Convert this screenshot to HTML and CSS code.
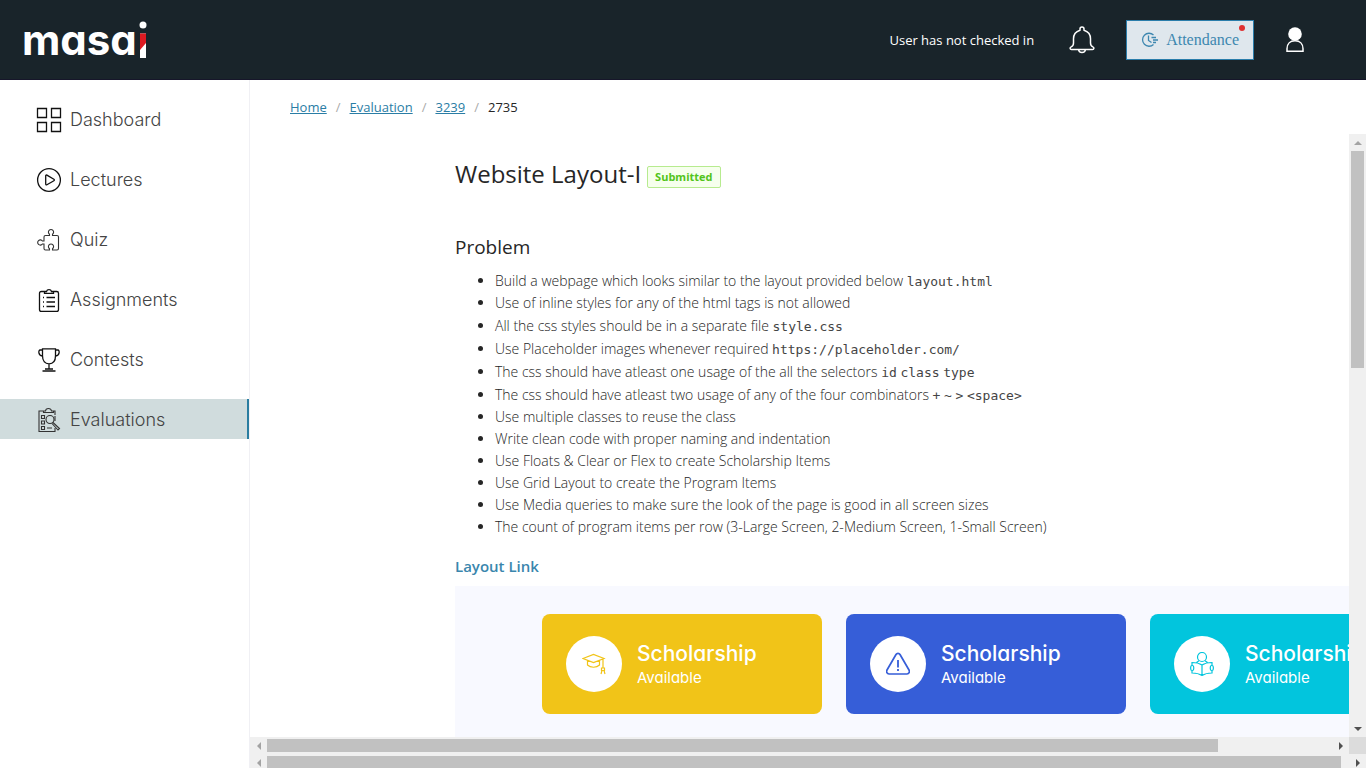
FILE: index.html
```html
<!DOCTYPE html>
<html lang="en">
<head>
<meta charset="utf-8">
<meta name="viewport" content="width=device-width, initial-scale=1">
<title>Website Layout-I</title>
<link rel="stylesheet" href="styles.css">
</head>
<body>
<header class="topbar">
  <a class="logo" href="#" aria-label="masai">
    <span class="logo-text">masa</span>
    <svg class="logo-i" width="10" height="38" viewBox="0 0 10 38"><circle cx="6" cy="4" r="3.500" fill="#fff"/><path d="M3 12.500h6V37H3z" fill="#fff"/><path d="M3 12.500h6V22L3 29z" fill="#dd1a21"/></svg>
  </a>
  <div class="topbar-tools">
    <span class="check-state">User has not checked in</span>
    <button class="icon-button" aria-label="Notifications">
      <svg width="26" height="28" viewBox="0 0 26 28" fill="none" stroke="#fff" stroke-width="1.500" stroke-linejoin="round"><path d="M11 4.200V3a2 2 0 0 1 4 0v1.200c4.300 1.300 6.500 4.600 6.500 8.600v4.200c0 2 .7 3.200 2.300 3.900 1.700.8 1.300 2.600-.3 2.600H2.500c-1.600 0-2-1.800-.3-2.600 1.600-.7 2.300-1.900 2.300-3.900v-4.200c0-4 2.200-7.300 6.500-8.600zM9.500 23.500c.4 4 6.600 4 7 0"/></svg>
    </button>
    <button class="attendance">
      <svg width="18" height="16" viewBox="0 0 18 16" fill="none" stroke="#3d87b0" stroke-width="1.300"><path d="M12.500 3A6.500 6.500 0 1 0 12.500 12.500M7.500 3.500v5l3 2M10.500 5.500h4.500M12 8h5M12 10.500h3"/></svg>
      <span>Attendance</span>
      <i class="dot"></i>
    </button>
    <button class="icon-button" aria-label="Profile">
      <svg width="20" height="26" viewBox="0 0 20 26"><circle cx="10" cy="7" r="6.800" fill="#fff"/><path d="M2 24.300v-2.500c0-4.800 3-8 8-8s8 3.200 8 8v2.500z" fill="none" stroke="#fff" stroke-width="1.500"/></svg>
    </button>
  </div>
</header>
<div class="shell">
  <nav class="sidebar" aria-label="Main">
    <a class="nav-item" href="#"><svg class="nav-icon" viewBox="0 0 24 24"><path d="M.5.500h9v9h-9zM14.500.500h9v9h-9zM.5 14.500h9v9h-9zM14.500 14.500h9v9h-9z"/></svg><span>Dashboard</span></a>
    <a class="nav-item" href="#"><svg class="nav-icon" viewBox="0 0 24 24"><circle cx="12" cy="12" r="11.400"/><path d="M8.700 7.800c0-.7.700-1 1.200-.7l7 4.100c.6.400.6 1.200 0 1.500l-7 4.100c-.5.300-1.200 0-1.200-.7z"/></svg><span>Lectures</span></a>
    <a class="nav-item" href="#"><svg class="nav-icon thin" viewBox="0 0 24 24"><path d="M7 9c0-1 .6-1.500 1.500-1.500h4V6.200a2.600 2.600 0 1 1 3 0v1.300h4.500c1 0 1.500.6 1.500 1.500v11.500c0 1-.6 1.500-1.500 1.500h-4.500v-1.300a2.600 2.600 0 1 0-3 0V22h-4C7.600 22 7 21.500 7 20.500V16H5.400a2.600 2.600 0 1 1 0-3H7z"/></svg><span>Quiz</span></a>
    <a class="nav-item" href="#"><svg class="nav-icon" viewBox="0 0 24 24"><path d="M7.500 3.500H4.300C3.200 3.500 2.500 4.200 2.500 5.300V21.500c0 1.100.7 1.900 1.800 1.900h15.400c1.100 0 1.800-.8 1.800-1.900V5.300c0-1.100-.7-1.800-1.800-1.800h-3.200v1.900h-9zM7.500 3.500h2a2.600 2.600 0 0 1 5 0h2M9.500 9.500H18M9.500 14H18M9.500 18.500H18M6 9.500h1M6 14h1M6 18.500h1"/></svg><span>Assignments</span></a>
    <a class="nav-item" href="#"><svg class="nav-icon" viewBox="0 0 24 24"><path d="M5.500.8h13v7c0 5.500-2.700 8-6.500 8s-6.500-2.500-6.500-8zM5.500 2H3.200C.9 2 1.300 8 5.700 8M18.500 2h2.300c2.300 0 1.900 6-2.500 6M12 16v5M8 21h8M5.500 23h13"/></svg><span>Contests</span></a>
    <a class="nav-item active" href="#" aria-current="page"><svg class="nav-icon thin" viewBox="0 0 24 24"><path d="M7 3H2v20.500h16V20M18 7V3h-4M6.500 4.500V3h2c.3-3.400 5.500-3.400 6 0h2v1.500zM4.500 7.500h3v3h-3zM4.500 13h3v3h-3zM4.500 18.500h3v3h-3zM10 20h5"/><circle cx="13" cy="11.500" r="4"/><path d="m16 14.500 6.500 6-1.500 1.500-6-6.500M18 8v5"/></svg><span>Evaluations</span></a>
  </nav>
  <main class="main">
    <nav class="crumbs" aria-label="Breadcrumb"><a href="#">Home</a><i>/</i><a href="#">Evaluation</a><i>/</i><a href="#">3239</a><i>/</i><span>2735</span></nav>
    <div class="frame">
      <article class="doc">
        <div class="title-row"><h1>Website Layout-I</h1><span class="tag">Submitted</span></div>
        <h2>Problem</h2>
        <ul class="tasks">
          <li class="has-code">Build a webpage which looks similar to the layout provided below <code>layout.html</code></li>
          <li>Use of inline styles for any of the html tags is not allowed</li>
          <li class="has-code">All the css styles should be in a separate file <code>style.css</code></li>
          <li class="has-code">Use Placeholder images whenever required <code>https://placeholder.com/</code></li>
          <li class="has-code">The css should have atleast one usage of the all the selectors <code>id</code> <code>class</code> <code>type</code></li>
          <li class="has-code">The css should have atleast two usage of any of the four combinators <code>+</code> <code>~</code> <code>&gt;</code> <code>&lt;space&gt;</code></li>
          <li>Use multiple classes to reuse the class</li>
          <li>Write clean code with proper naming and indentation</li>
          <li>Use Floats &amp; Clear or Flex to create Scholarship Items</li>
          <li>Use Grid Layout to create the Program Items</li>
          <li>Use Media queries to make sure the look of the page is good in all screen sizes</li>
          <li>The count of program items per row (3-Large Screen, 2-Medium Screen, 1-Small Screen)</li>
        </ul>
        <a class="layout-link" href="#">Layout Link</a>
        <div class="preview">
          <section class="card yellow"><span class="badge"><svg width="24" height="24" viewBox="0 0 24 24"><path d="M1 6.500 11.500 2.500 22 6.500 11.500 10.500zM5.500 8.500v4.500c3 3 9 3 12 0V8.500M21 7v8.500M19.500 16h3v2.500h-3zM20 18.500l-1 3.500M22 18.500l1 3.500"/></svg></span><div><h3>Scholarship</h3><p>Available</p></div></section>
          <section class="card blue"><span class="badge"><svg width="24" height="24" viewBox="0 0 24 24"><path stroke-width="1.700" d="M10 2.500a2.300 2.300 0 0 1 4 0l9 15.500c1 1.900 0 4-2 4H3c-2 0-3-2.100-2-4z"/><path stroke-width="1.800" d="M12 8v7.500M12 17v2"/></svg></span><div><h3>Scholarship</h3><p>Available</p></div></section>
          <section class="card cyan"><span class="badge"><svg width="24" height="24" viewBox="0 0 24 24"><circle cx="12" cy="5" r="4.500"/><path d="M12 13c-3-2-6-2.500-10-2.500V21c4 0 7 .5 10 2.500 3-2 6-2.500 10-2.500V10.500c-4 0-7 .5-10 2.500zM12 13v10M6.500 10.500 9 8.800M17.500 10.500 15 8.800"/><rect x=".7" y="13.500" width="3" height="5" rx="1.500" fill="#fff"/><rect x="20.300" y="13.500" width="3" height="5" rx="1.500" fill="#fff"/></svg></span><div><h3>Scholarship</h3><p>Available</p></div></section>
        </div>
      </article>
      <div class="bar vertical" aria-hidden="true"><i class="arrow up"></i><b class="thumb"></b><i class="arrow down"></i></div>
      <div class="bar horizontal" aria-hidden="true"><i class="arrow left"></i><b class="thumb inner"></b><i class="arrow right"></i></div>
      <div class="corner"></div>
    </div>
    <div class="bar horizontal outer" aria-hidden="true"><i class="arrow left"></i><b class="thumb"></b><i class="arrow right"></i></div>
  </main>
</div>
</body>
</html>
```
FILE: styles.css
```css
* { box-sizing: border-box; }
body {
  margin: 0;
  height: 100vh;
  display: flex;
  flex-direction: column;
  overflow: hidden;
  background: #fff;
  color: #262626;
  font: 14px/22px "Open Sans", "Noto Sans", sans-serif;
}
h1, h2, h3, p, ul { margin: 0; padding: 0; font-weight: 500; }
i { font-style: normal; }
svg { display: block; flex: none; }
button { margin: 0; padding: 0; border: 0; background: none; cursor: pointer; }

.topbar {
  flex: none;
  height: 80px;
  padding: 0 58px 0 22px;
  display: flex;
  align-items: center;
  justify-content: space-between;
  background: #19242a;
  border-bottom: 1px solid #16162a;
}
.logo { display: flex; align-items: center; color: #fff; text-decoration: none; }
.logo-text { font: 700 42px/48px Inter, sans-serif; font-feature-settings: "cv11"; }
.topbar-tools { display: flex; align-items: center; color: #fff; }
.check-state { font-size: 13px; }
.icon-button { display: flex; justify-content: center; width: 26px; }
.topbar-tools .icon-button { margin-left: 35px; }
.topbar-tools .attendance { margin-left: 31px; }
.topbar-tools .attendance + .icon-button { margin-left: 28px; }
.attendance {
  position: relative;
  display: flex;
  align-items: center;
  gap: 7px;
  height: 40px;
  padding: 0 14px;
  border: 1px solid #2a7dab;
  background: #dfe7ed;
  color: #3d87b0;
  font: 16px/24px "Liberation Serif", serif;
}
.dot { position: absolute; top: 4px; right: 8px; width: 6px; height: 6px; border-radius: 50%; background: #e03131; }

.shell { flex: 1; min-height: 0; display: flex; }
.sidebar {
  flex: none;
  width: 250px;
  padding-top: 19px;
  display: flex;
  flex-direction: column;
  gap: 20px;
  border-right: 1px solid #f0f0f4;
}
.nav-item {
  height: 40px;
  padding: 2px 0 0 37px;
  display: flex;
  align-items: center;
  gap: 9px;
  color: #444;
  font: 300 18px/24px Inter, sans-serif;
  text-decoration: none;
}
.nav-item.active { background: #d0dcdd; border-right: 2px solid #2a7da0; }
.nav-icon { width: 24px; height: 24px; fill: none; stroke: #111; stroke-width: 1.300; overflow: visible; }
.nav-icon.thin { stroke: #333; stroke-width: 1.100; }

.main { flex: 1; min-width: 0; display: flex; flex-direction: column; }
.crumbs { flex: none; height: 54px; padding: 16px 40px; display: flex; gap: 9px; font-size: 13px; }
.crumbs a { color: #2a7da5; }
.crumbs i { color: #aaa; }
.frame { flex: 1; min-height: 0; display: grid; grid-template: minmax(0, 1fr) 17px / minmax(0, 1fr) 17px; }
.doc { overflow: hidden; padding: 24px 0 0 205px; }
.title-row { display: flex; align-items: center; gap: 6px; height: 32px; white-space: nowrap; }
h1 { font-size: 24px; line-height: 32px; }
.tag {
  margin-top: 6px;
  padding: 0 7px;
  border: 1px solid #b7eb8f;
  border-radius: 2px;
  background: #f6ffed;
  color: #52c41a;
  font-size: 11px;
  line-height: 20px;
  font-weight: 700;
}
h2 { margin-top: 43px; font-size: 19px; line-height: 28px; }
.tasks { margin-top: 8px; padding-left: 40px; font-weight: 300; white-space: nowrap; }
.tasks .has-code { line-height: 23px; }
code { font: 13px/16px "DejaVu Sans Mono", monospace; color: #444; }
.layout-link { display: block; margin-top: 16px; font-size: 15px; line-height: 24px; font-weight: 600; color: #3a86ad; text-decoration: none; }
.preview { width: 1058px; height: 600px; margin-top: 8px; padding: 28px 87px; display: flex; align-items: flex-start; gap: 24px; background: #f8f9ff; }
.card { flex: none; width: 280px; height: 100px; padding: 0 24px; display: flex; align-items: center; gap: 15px; border-radius: 8px; color: #fff; font-family: Inter, sans-serif; font-feature-settings: "cv11"; }
.card h3 { font-size: 21px; line-height: 28px; }
.card p { font-size: 15px; line-height: 20px; font-weight: 400; }
.badge { display: grid; place-items: center; width: 56px; height: 56px; border-radius: 50%; background: #fff; }
.badge svg { fill: none; stroke: currentColor; stroke-width: 1.200; }
.yellow { background: #f1c418; }
.yellow .badge { color: #f1c418; }
.blue { background: #365ed8; }
.blue .badge { color: #365ed8; }
.cyan { background: #02c5dd; }
.cyan .badge { color: #02c5dd; }

.bar { display: flex; align-items: center; background: #f0f0f0; }
.vertical { flex-direction: column; }
.outer { flex: none; height: 14px; align-items: flex-start; }
.arrow { flex: none; width: 17px; height: 17px; display: grid; place-items: center; }
.arrow::before { content: ""; border: 4px solid transparent; }
.up::before { border-top: 0; border-bottom-color: #a3a3a3; }
.down::before { border-bottom: 0; border-top-color: #505050; }
.left::before { border-left: 0; border-right-color: #a3a3a3; }
.right::before { border-right: 0; border-left-color: #505050; }
.thumb { background: #c1c1c1; }
.vertical .thumb { width: 13px; height: 36%; }
.horizontal .thumb { height: 13px; flex: 1; }
.horizontal .inner { flex: none; width: 86.500%; }
.outer .thumb { margin-top: 2px; margin-right: 8px; }
.down { margin-top: auto; }
.right { margin-left: auto; }
.corner { background: #dcdcdc; }
```
